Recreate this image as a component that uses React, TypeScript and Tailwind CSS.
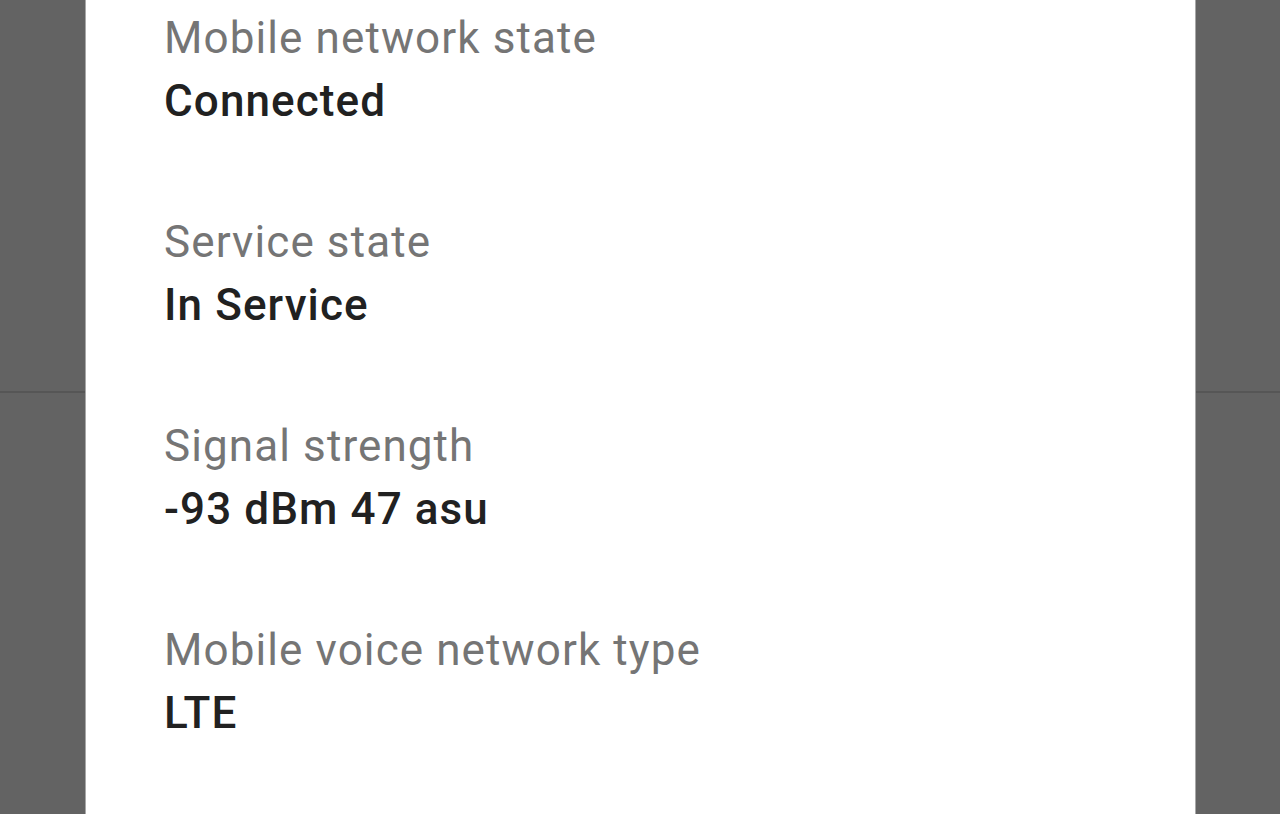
import React from "react";

const items = [
  { label: "Mobile network state", value: "Connected" },
  { label: "Service state", value: "In Service" },
  { label: "Signal strength", value: "-93 dBm 47 asu" },
  { label: "Mobile voice network type", value: "LTE" },
];

function Side() {
  return (
    <div className="flex flex-col bg-[#636363]">
      <div className="h-[391px]" />
      <div className="h-[2px] bg-[#565656]" />
      <div className="flex-1" />
    </div>
  );
}

export default function App() {
  return (
    <div
      className="w-[1280px] h-[814px] overflow-hidden grid grid-cols-[85px_1px_1109px_1px_84px]"
      style={{ fontFamily: "Roboto, 'Noto Sans', sans-serif" }}
    >
      <Side />
      <div className="bg-[#a8a8a8]" />
      <div className="bg-white pl-[78px] pt-[7px] flex flex-col gap-[79px]">
        {items.map((it) => (
          <div key={it.label} className="flex flex-col">
            <div className="text-[44px] leading-[62px] tracking-[1.1px] text-[#757575]">{it.label}</div>
            <div className="mt-[1px] text-[44px] leading-[62px] tracking-[1.1px] font-medium text-[#212121]">{it.value}</div>
          </div>
        ))}
      </div>
      <div className="bg-[#a8a8a8]" />
      <Side />
    </div>
  );
}
